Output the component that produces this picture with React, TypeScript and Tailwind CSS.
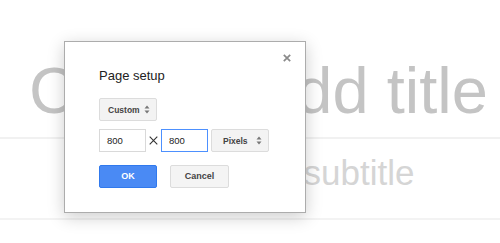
import React from 'react';

const font = { fontFamily: '"Liberation Sans", Arial, sans-serif' };

function Arrows() {
  return (
    <svg width="6" height="9" viewBox="0 0 6 9" className="shrink-0">
      <path d="M3 0.5 L5.5 3.5 L0.5 3.5 Z" fill="#777" />
      <path d="M3 8.5 L5.5 5.5 L0.5 5.5 Z" fill="#777" />
    </svg>
  );
}

function Select({ label, className }: { label: string; className: string }) {
  return (
    <div
      className={
        'flex h-[23px] items-center justify-between rounded-[2px] border border-[#dcdcdc] bg-[#f3f3f3] pr-[6px] text-[8.5px] leading-[10px] font-bold text-[#444] ' +
        className
      }
    >
      <span>{label}</span>
      <Arrows />
    </div>
  );
}

function Field({ value, focused }: { value: string; focused?: boolean }) {
  if (focused) {
    return (
      <div className="flex h-[23px] w-[47px] items-center pl-[8px] text-[9.5px] leading-[11px] text-[#222] ring-1 ring-inset ring-[#4d90fe]">
        {value}
      </div>
    );
  }
  return (
    <div className="flex h-[23px] w-[47px] items-center pl-[8px] text-[9.5px] leading-[11px] text-[#222] ring-1 ring-inset ring-[#d9d9d9]">
      {value}
    </div>
  );
}

export default function App() {
  return (
    <div className="relative h-[243px] w-[500px] overflow-hidden bg-white" style={font}>
      {/* slide behind the dialog */}
      <div className="mt-[58px] whitespace-nowrap pl-[29px] text-[65px] leading-[65px] text-[#c4c4c4]">
        Click to add title
      </div>
      <div className="mt-[14px] h-[2px] bg-[#f1f1f1]" />
      <div className="mt-[16px] whitespace-nowrap pl-[111px] text-[35px] leading-[35px] text-[#d5d5d5]">
        Click to add subtitle
      </div>
      <div className="mt-[28px] h-[2px] bg-[#f3f3f3]" />

      {/* page setup dialog */}
      <div className="absolute left-[64px] top-[41px] h-[172px] w-[242px] border border-[#acacac] bg-white shadow-[0_4px_16px_rgba(0,0,0,0.2)]">
        <button className="absolute right-[14px] top-[12px]">
          <svg width="8" height="8" viewBox="0 0 8 8">
            <path d="M0.8 0.8 L7.2 7.2 M7.2 0.8 L0.8 7.2" stroke="#8a8a8a" strokeWidth="1.7" />
          </svg>
        </button>
        <div className="flex flex-col pl-[34px] pt-[27px]">
          <div className="text-[13px] leading-[13px] text-[#222]">Page setup</div>
          <Select label="Custom" className="mt-[16px] w-[58px] pl-[8px]" />
          <div className="mt-[8px] flex items-center">
            <Field value="800" />
            <div className="flex w-[15px] justify-center">
              <svg width="9" height="9" viewBox="0 0 9 9">
                <path d="M0.7 0.7 L8.3 8.3 M8.3 0.7 L0.7 8.3" stroke="#333" strokeWidth="1.1" />
              </svg>
            </div>
            <Field value="800" focused />
            <Select label="Pixels" className="ml-[3px] w-[58px] pl-[11px]" />
          </div>
          <div className="mt-[13px] flex gap-[13px]">
            <button className="h-[23px] w-[58px] rounded-[2px] border border-[#3079ed] bg-[#4a8af4] text-[9px] font-bold text-white">
              OK
            </button>
            <button className="h-[23px] w-[59px] rounded-[2px] border border-[#dcdcdc] bg-[#f4f4f4] text-[9px] font-bold text-[#444]">
              Cancel
            </button>
          </div>
        </div>
      </div>
    </div>
  );
}
